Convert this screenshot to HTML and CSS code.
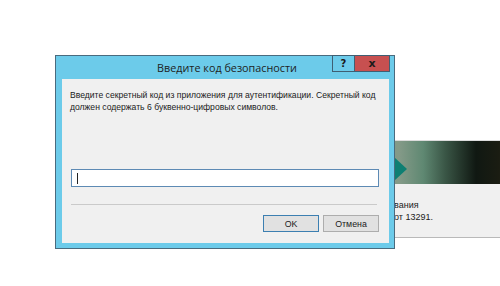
FILE: index.html
```html
<!DOCTYPE html>
<html lang="ru">
  <head>
    <meta charset="UTF-8" />
    <meta name="viewport" content="width=device-width, initial-scale=1.0" />
    <title>Введите код безопасности</title>
    <link rel="stylesheet" href="styles.css">
  </head>
  <body>
    <div class="desktop">
      <!-- window behind the dialog -->
      <div class="back-window">
        <div class="back-top"></div>
        <div class="banner">
          <span class="banner-arrow"></span>
        </div>
        <div class="back-body">
          <div>вания</div>
          <div>от 13291.</div>
        </div>
      </div>

      <div class="dialog">
        <div class="titlebar">
          <div class="title">Введите код безопасности</div>
          <div class="caption-buttons">
            <div class="cap-btn help">?</div>
            <div class="cap-btn close">x</div>
          </div>
        </div>

        <div class="content">
          <p class="message">
            Введите секретный код из приложения для аутентификации. Секретный код<br />
            должен содержать 6 буквенно-цифровых символов.
          </p>

          <div class="code-input"><span class="caret"></span></div>

          <div class="separator"></div>

          <div class="actions">
            <button class="btn default">OK</button>
            <button class="btn">Отмена</button>
          </div>
        </div>
      </div>
    </div>
  </body>
</html>
```

FILE: styles.css
```css
* {
  margin: 0;
  padding: 0;
  box-sizing: border-box;
}

body {
  background: #ffffff;
  font-family: "Liberation Sans", Arial, sans-serif;
  color: #1b1b1b;
}

.desktop {
  position: relative;
  width: 500px;
  height: 286px;
  overflow: hidden;
}

/* window behind */
.back-window {
  position: absolute;
  left: 300px;
  top: 130px;
  width: 220px;
  height: 108px;
  background: #f0f0f0;
  border-bottom: 1px solid #b9b9b9;
  display: flex;
  flex-direction: column;
}

.back-top {
  flex-shrink: 0;
  height: 11px;
  background: #ffffff;
  border-bottom: 1px solid #dcdcdc;
}

.banner {
  flex-shrink: 0;
  height: 43px;
  position: relative;
  background: linear-gradient(90deg, #8a9886 0%, #849a88 45%, #5f8872 56%, #3a5646 66%, #101812 80%, #1a1c12 90%, #28281a 100%);
}

.banner-arrow {
  position: absolute;
  left: 94px;
  top: 16px;
  border-top: 12px solid transparent;
  border-bottom: 12px solid transparent;
  border-left: 13px solid #0e7f72;
}

.back-body {
  padding: 15px 0 0 94px;
  font-size: 9px;
  line-height: 12px;
  white-space: nowrap;
  color: #1b1b1b;
}

/* dialog */
.dialog {
  position: absolute;
  left: 55px;
  top: 55px;
  width: 340px;
  height: 194px;
  background: #6ccbea;
  border: 1px solid #4a6b7e;
  padding: 0 5px 5px 6px;
  display: flex;
  flex-direction: column;
}

.titlebar {
  flex-shrink: 0;
  height: 23px;
  position: relative;
  display: flex;
  align-items: center;
  justify-content: center;
}

.title {
  font-family: "Open Sans", "Noto Sans", sans-serif;
  font-size: 10.8px;
  color: #1e1e1e;
  margin-left: 3px;
}

.caption-buttons {
  position: absolute;
  right: -1px;
  top: -1px;
  display: flex;
}

.cap-btn {
  height: 17px;
  display: flex;
  align-items: center;
  justify-content: center;
  font-family: "DejaVu Sans", sans-serif;
  font-weight: bold;
  font-size: 10px;
  color: #1a1a1a;
  border: 1px solid #3f5f73;
}

.cap-btn.help {
  width: 22px;
  background: #6ccbea;
  border-right: none;
}

.cap-btn.close {
  width: 36px;
  background: #c75050;
  font-size: 11px;
}

.content {
  flex: 1;
  background: #f0f0f0;
  padding: 10px 10px 0 9px;
  display: flex;
  flex-direction: column;
}

.message {
  font-size: 8.6px;
  line-height: 12px;
  white-space: nowrap;
  margin-left: -1px;
  color: #1b1b1b;
}

.code-input {
  flex-shrink: 0;
  margin-top: 56px;
  height: 18px;
  background: #ffffff;
  border: 1px solid #5d8ab4;
  padding: 3px 5px;
  display: flex;
  align-items: center;
}

.caret {
  width: 1px;
  height: 11px;
  background: #222222;
}

.separator {
  flex-shrink: 0;
  margin-top: 17px;
  margin-right: 2px;
  height: 1px;
  background: #cacaca;
}

.actions {
  margin-top: 10px;
  display: flex;
  justify-content: flex-end;
  gap: 4px;
}

.btn {
  width: 56px;
  height: 17px;
  background: #e1e1e1;
  border: 1px solid #adadad;
  font-family: "Liberation Sans", Arial, sans-serif;
  font-size: 8.8px;
  color: #1b1b1b;
}

.btn.default {
  border-color: #3c7fb1;
}
```
